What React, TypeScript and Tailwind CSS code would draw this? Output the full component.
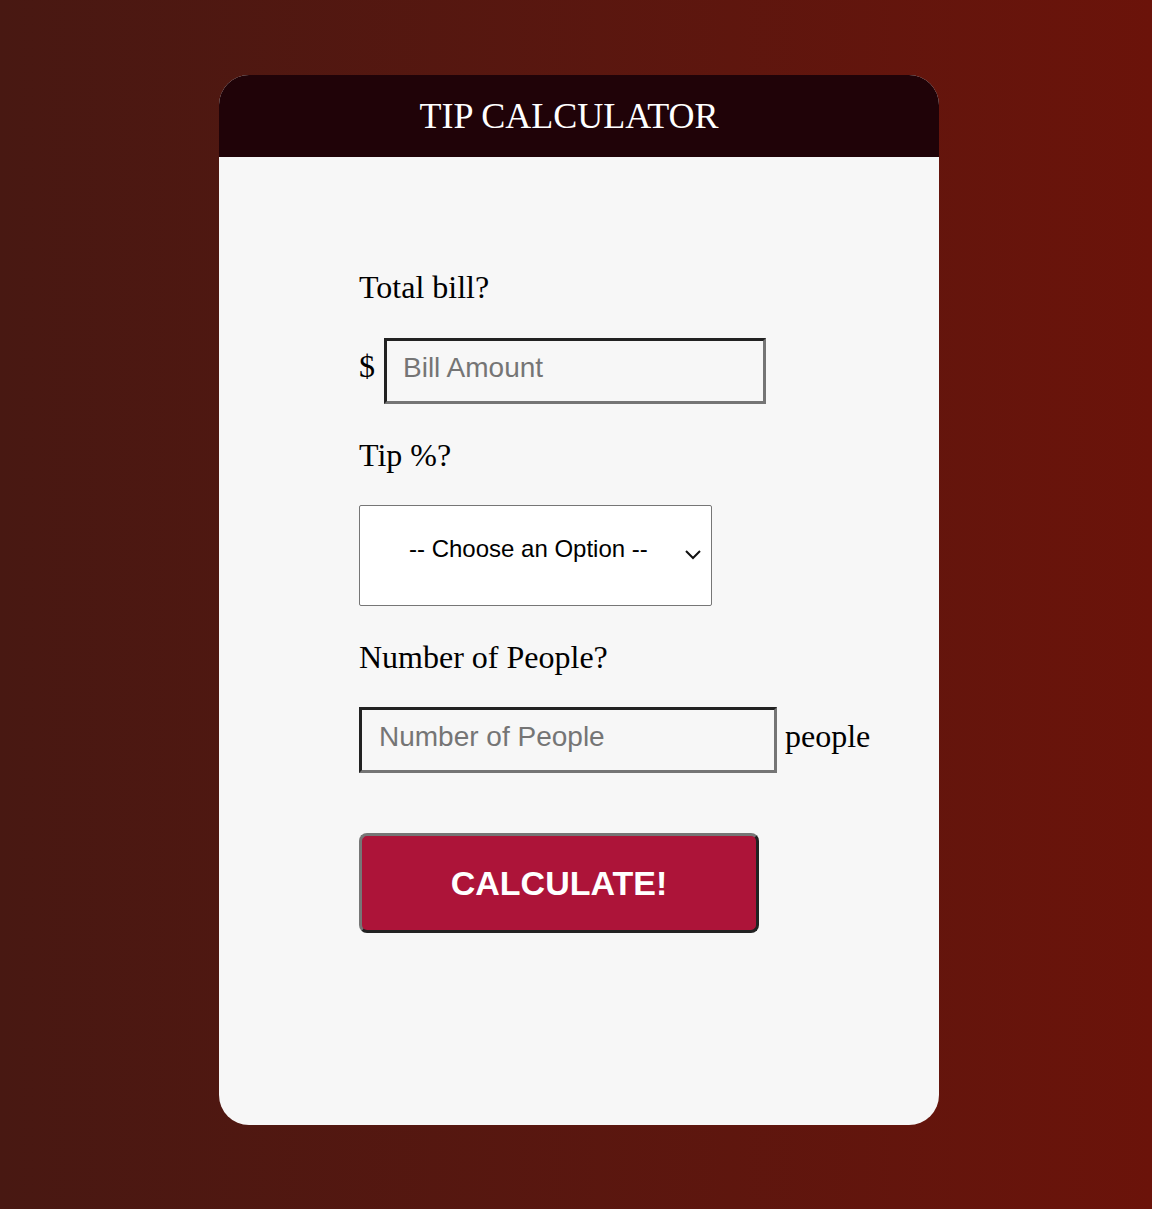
const App = () => {
  return (
    <div className="min-h-[1209px] w-full bg-gradient-to-r from-[#481812] to-[#6b130a] pt-[75px] font-['Liberation_Serif',serif]">
      <div className="ml-[219px] h-[1050px] w-[720px] overflow-hidden rounded-[30px] bg-[#f7f7f7]">
        {/* header */}
        <div className="flex h-[82px] items-center justify-center bg-[#200308] pr-[20px]">
          <h1 className="text-[36px] leading-none text-white">TIP CALCULATOR</h1>
        </div>

        <div className="flex flex-col pl-[140px] pt-[112px] text-black">
          <div className="h-[36px] text-[32px] leading-[36px]">Total bill?</div>

          <div className="mt-[33px] flex items-center">
            <span className="mr-[9px] pb-[10px] text-[32px] leading-none">$</span>
            <input
              type="text"
              placeholder="Bill Amount"
              className="h-[66px] w-[382px] border-[3px] border-b-[#757575] border-l-[#222] border-r-[#757575] border-t-[#222] bg-transparent pb-[7px] pl-[16px] font-['Liberation_Sans',sans-serif] text-[28px] outline-none placeholder:text-[#757575]"
            />
          </div>

          <div className="mt-[33px] h-[36px] text-[32px] leading-[36px]">Tip %?</div>

          <div className="relative mt-[32px] w-[353px]">
            <select
              defaultValue=""
              className="h-[101px] w-[353px] appearance-none rounded-[2px] border border-[#767676] bg-white pb-[13px] pl-[49px] font-['Liberation_Sans',sans-serif] text-[24px] text-black outline-none"
            >
              <option value="" disabled>
                -- Choose an Option --
              </option>
              <option value="5">5%</option>
              <option value="10">10%</option>
              <option value="15">15%</option>
              <option value="20">20%</option>
            </select>
            <svg
              className="pointer-events-none absolute left-[325px] top-[43px]"
              width="18"
              height="12"
              viewBox="0 0 18 12"
              fill="none"
            >
              <path d="M2 3l7 7 7-7" stroke="#111" strokeWidth="2" />
            </svg>
          </div>

          <div className="mt-[33px] h-[36px] text-[32px] leading-[36px]">Number of People?</div>

          <div className="mt-[32px] flex items-center">
            <input
              type="text"
              placeholder="Number of People"
              className="h-[66px] w-[418px] border-[3px] border-b-[#757575] border-l-[#222] border-r-[#757575] border-t-[#222] bg-transparent pb-[7px] pl-[17px] font-['Liberation_Sans',sans-serif] text-[28px] outline-none placeholder:text-[#757575]"
            />
            <span className="ml-[8px] pb-[8px] text-[32px] leading-none">people</span>
          </div>

          <button className="mt-[60px] h-[100px] w-[400px] rounded-[8px] border-[3px] border-b-[#222] border-l-[#767676] border-r-[#222] border-t-[#767676] bg-[#ad1439] font-['Liberation_Sans',sans-serif] text-[34px] font-bold text-white">
            CALCULATE!
          </button>
        </div>
      </div>
    </div>
  );
};

export default App;
